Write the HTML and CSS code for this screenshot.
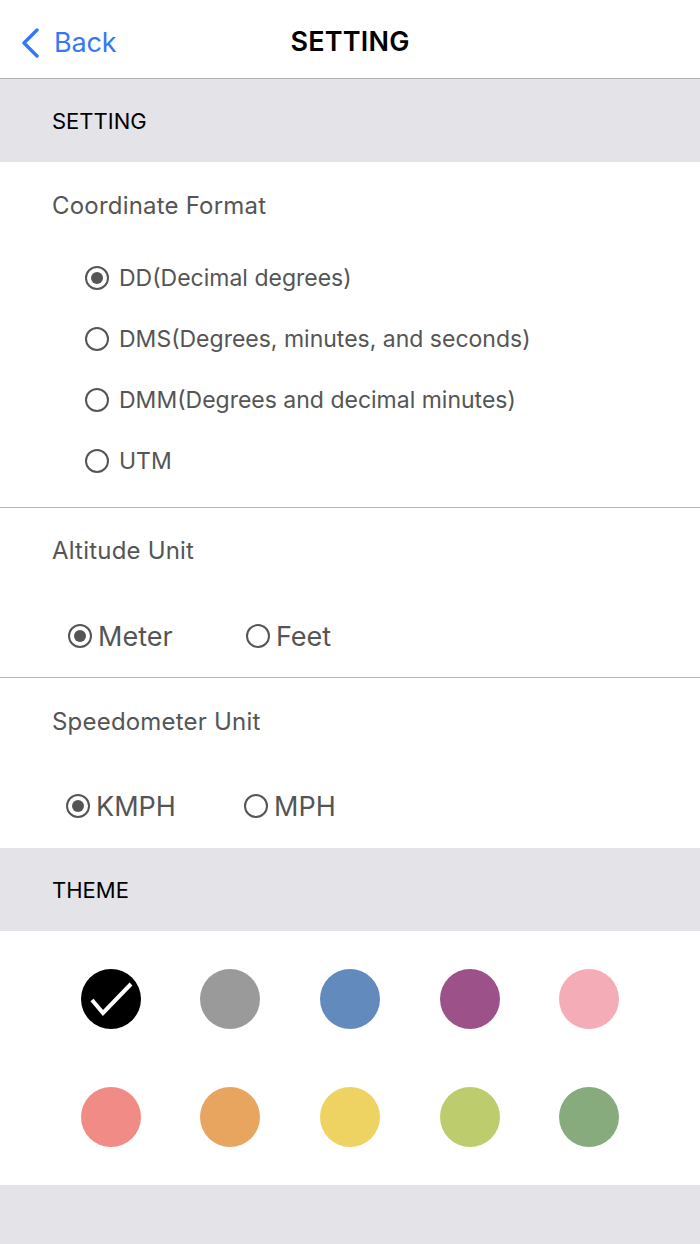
FILE: index.html
```html
<!DOCTYPE html>
<html lang="en">
<head>
    <meta charset="UTF-8">
    <meta name="viewport" content="width=device-width, initial-scale=1.0">
    <title>Setting</title>
    <link rel="stylesheet" href="styles.css">
</head>
<body>
    <div class="navbar">
        <a class="back" href="#">
            <svg class="chevron" width="20" height="30" viewBox="0 0 20 30">
                <path d="M17 2 L4 15 L17 28" fill="none" stroke="#3478f6" stroke-width="3.4" stroke-linecap="round" stroke-linejoin="round"/>
            </svg>
            <span>Back</span>
        </a>
        <div class="nav-title">SETTING</div>
    </div>

    <div class="section-header">SETTING</div>

    <div class="group coord">
        <div class="group-title">Coordinate Format</div>
        <div class="options">
            <div class="option"><span class="radio checked"></span>DD(Decimal degrees)</div>
            <div class="option"><span class="radio"></span>DMS(Degrees, minutes, and seconds)</div>
            <div class="option"><span class="radio"></span>DMM(Degrees and decimal minutes)</div>
            <div class="option"><span class="radio"></span>UTM</div>
        </div>
    </div>

    <div class="group unit altitude">
        <div class="group-title">Altitude Unit</div>
        <div class="unit-row">
            <div class="unit-option"><span class="radio checked"></span>Meter</div>
            <div class="unit-option"><span class="radio"></span>Feet</div>
        </div>
    </div>

    <div class="group unit speed">
        <div class="group-title">Speedometer Unit</div>
        <div class="unit-row">
            <div class="unit-option"><span class="radio checked"></span>KMPH</div>
            <div class="unit-option"><span class="radio"></span>MPH</div>
        </div>
    </div>

    <div class="section-header">THEME</div>

    <div class="themes">
        <div class="swatch black">
            <svg width="60" height="60" viewBox="0 0 60 60">
                <path d="M11 31 L22 44 L50 15" fill="none" stroke="#fff" stroke-width="4"/>
            </svg>
        </div>
        <div class="swatch gray"></div>
        <div class="swatch blue"></div>
        <div class="swatch purple"></div>
        <div class="swatch pink"></div>
        <div class="swatch salmon"></div>
        <div class="swatch orange"></div>
        <div class="swatch yellow"></div>
        <div class="swatch lime"></div>
        <div class="swatch green"></div>
    </div>

    <div class="footer"></div>
</body>
</html>
```

FILE: styles.css
```css
body {
    margin: 0;
    font-family: Inter, "Open Sans", sans-serif;
    background: #fff;
    color: #555;
}
.navbar {
    height: 78px;
    border-bottom: 1px solid #b4b4b4;
    display: flex;
    align-items: center;
    justify-content: center;
    position: relative;
}
.back {
    position: absolute;
    left: 20px;
    top: 26px;
    display: flex;
    align-items: center;
    color: #3478f6;
    text-decoration: none;
    font-size: 27px;
}
.back span {
    margin-left: 14px;
    letter-spacing: -0.2px;
}
.nav-title {
    margin-top: 5px;
    font-size: 27px;
    font-weight: 600;
    color: #000;
    letter-spacing: 0.2px;
}
.section-header {
    height: 83px;
    background: #e4e3e8;
    display: flex;
    align-items: center;
    padding-left: 52px;
    font-size: 22px;
    color: #000;
}
.group {
    padding: 29px 0 16px 52px;
    border-bottom: 1px solid #b4b4b4;
}
.group-title {
    height: 30px;
    line-height: 30px;
    font-size: 24px;
    color: #555;
    letter-spacing: 0.2px;
}
.options {
    margin-top: 26px;
    padding-left: 33px;
}
.option {
    height: 61px;
    display: flex;
    align-items: center;
    font-size: 23px;
    color: #555;
}
.option .radio {
    margin-right: 10px;
}
.radio {
    width: 24px;
    height: 24px;
    box-sizing: border-box;
    border: 2.5px solid #555;
    border-radius: 50%;
    display: inline-flex;
    align-items: center;
    justify-content: center;
    flex-shrink: 0;
}
.radio.checked::after {
    content: "";
    width: 12px;
    height: 12px;
    border-radius: 50%;
    background: #555;
}
.unit {
    padding-top: 28px;
    padding-bottom: 21px;
}
.speed {
    padding-top: 29px;
    padding-bottom: 22px;
    border-bottom: none;
}
.unit-row {
    margin-top: 49px;
    height: 40px;
    display: flex;
    align-items: center;
    font-size: 27px;
    color: #555;
}
.altitude .unit-row {
    margin-top: 50px;
    margin-left: 16px;
}
.speed .unit-row {
    margin-left: 14px;
}
.unit-option {
    width: 178px;
    display: flex;
    align-items: center;
}
.unit-option .radio {
    margin-right: 6px;
}
.themes {
    display: grid;
    grid-template-columns: repeat(5, 1fr);
    justify-items: center;
    row-gap: 58px;
    padding: 38px 51px;
}
.swatch {
    width: 60px;
    height: 60px;
    border-radius: 50%;
}
.swatch svg {
    display: block;
}
.black { background: #000; }
.gray { background: #9a9a9a; }
.blue { background: #628abd; }
.purple { background: #9c5289; }
.pink { background: #f4acb7; }
.salmon { background: #f08b86; }
.orange { background: #e8a55f; }
.yellow { background: #eed362; }
.lime { background: #bdcd6d; }
.green { background: #87ab7d; }
.footer {
    height: 60px;
    background: #e4e3e8;
}
```
